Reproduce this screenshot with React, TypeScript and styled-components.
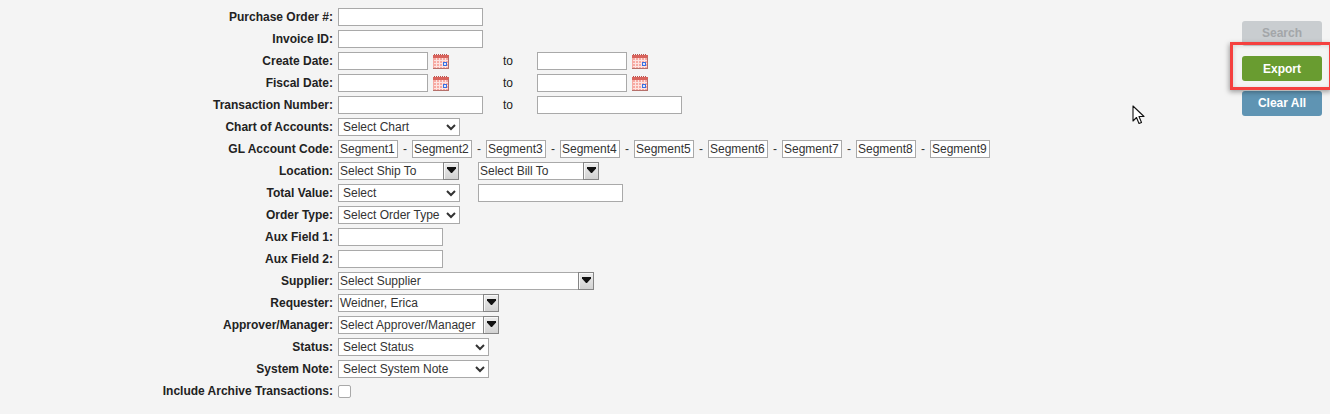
import styled, { createGlobalStyle } from 'styled-components';

const GlobalStyle = createGlobalStyle`
  html, body {
    margin: 0;
    padding: 0;
    background: #f4f4f4;
    font-family: 'Liberation Sans', Arial, sans-serif;
    font-size: 12px;
    color: #222;
  }
`;

const Page = styled.div`
  position: relative;
  display: flex;
  justify-content: space-between;
  width: 1330px;
  height: 414px;
  overflow: hidden;
`;

const Form = styled.div`
  display: flex;
  flex-direction: column;
  gap: 4px;
  padding-top: 8px;
`;

const Row = styled.div`
  display: flex;
  align-items: center;
  height: 18px;
`;

const Label = styled.label`
  width: 333px;
  margin-right: 5px;
  text-align: right;
  font-weight: bold;
  color: #222;
  flex-shrink: 0;
`;

const Input = styled.input<{ $w: number; $left?: number }>`
  box-sizing: border-box;
  width: ${(p) => p.$w}px;
  height: 18px;
  margin: 0 0 0 ${(p) => p.$left ?? 0}px;
  padding: 0 1px;
  border: 1px solid #a9a9a9;
  background: #fff;
  font: 12px 'Liberation Sans', Arial, sans-serif;
  color: #333;
  outline: none;
`;

const Select = styled.select<{ $w: number }>`
  box-sizing: border-box;
  width: ${(p) => p.$w}px;
  height: 18px;
  margin: 0;
  padding: 0;
  border: 1px solid #a9a9a9;
  border-radius: 0;
  background-color: #fff;
  font: 12px 'Liberation Sans', Arial, sans-serif;
  color: #333;
  outline: none;
`;

const Combo = styled.div<{ $w: number; $left?: number }>`
  box-sizing: border-box;
  display: flex;
  width: ${(p) => p.$w}px;
  height: 18px;
  margin-left: ${(p) => p.$left ?? 0}px;
  border: 1px solid #a9a9a9;
  background: #fff;
`;

const ComboText = styled.span`
  flex: 1;
  padding-left: 1px;
  line-height: 16px;
  color: #333;
  white-space: nowrap;
  overflow: hidden;
`;

const ComboButton = styled.span`
  box-sizing: border-box;
  display: flex;
  align-items: center;
  justify-content: center;
  width: 16px;
  margin: -1px -1px -1px 0;
  border: 1px solid #858585;
  box-shadow: inset 1px 1px 0 #f8f8f8;
  background: linear-gradient(#ececec, #d2d2d2);
`;

const ComboArrow = styled.svg`
  display: block;
  width: 9px;
  height: 6px;
  margin-bottom: 3px;
`;

const CalendarIcon = styled.svg`
  display: block;
  width: 16px;
  height: 15px;
  margin-left: 5px;
  flex-shrink: 0;
`;

const To = styled.span<{ $left: number }>`
  margin-left: ${(p) => p.$left}px;
  width: 34px;
  color: #222;
  flex-shrink: 0;
`;

const Dash = styled.span`
  width: 14px;
  text-align: center;
  color: #333;
  flex-shrink: 0;
`;

const Segment = styled.span`
  display: contents;
`;

const Checkbox = styled.span`
  box-sizing: border-box;
  display: block;
  width: 13px;
  height: 13px;
  margin-top: 1px;
  border: 1px solid #a9a9a9;
  border-radius: 2px;
  background: #fff;
`;

const Actions = styled.div`
  display: flex;
  flex-direction: column;
  gap: 10px;
  width: 80px;
  margin-right: 8px;
  padding-top: 21px;
`;

const ActionButton = styled.button<{ $bg: string; $fg: string; $lift?: boolean }>`
  width: 80px;
  height: 25px;
  margin: 0;
  padding: 0 0 ${(p) => (p.$lift ? 2 : 0)}px;
  border: 0;
  border-radius: 3px;
  background: ${(p) => p.$bg};
  color: ${(p) => p.$fg};
  font: bold 12px 'Liberation Sans', Arial, sans-serif;
`;

const Highlight = styled.div`
  position: absolute;
  left: 1230px;
  top: 42px;
  box-sizing: border-box;
  width: 102px;
  height: 48px;
  border: 3px solid #f5403f;
  box-shadow: -1px 2px 5px rgba(0, 0, 0, 0.35), inset 1px 1px 4px rgba(0, 0, 0, 0.12);
`;

const Cursor = styled.svg`
  position: absolute;
  left: 1132px;
  top: 105px;
  width: 13px;
  height: 20px;
`;

function Calendar() {
  const cols = [3, 6, 9, 12];
  const rows = [6, 9, 12];
  return (
    <CalendarIcon viewBox="0 0 16 15">
      <rect x="0" y="1" width="16" height="14" fill="#f6aaa3" />
      <path d="M0 2.5h16" stroke="#d8635c" strokeWidth="3" />
      <path d="M1 .5h1M3 .5h1M5 .5h1M7 .5h1M9 .5h1M11 .5h1M13 .5h1" stroke="#b9524c" strokeWidth="1" />
      {cols.map((x) => (
        <path key={x} d={`M${x + 0.5} 4v10`} stroke="#fde3e0" strokeWidth="1" />
      ))}
      {rows.map((y) => (
        <path key={y} d={`M1 ${y + 0.5}h14`} stroke="#fde3e0" strokeWidth="1" />
      ))}
      <path d="M15.5 3v12M0 14.5h16" stroke="#b5706b" strokeWidth="1" />
      <rect x="10.5" y="8.5" width="3" height="3" fill="#dfe8fb" stroke="#3b6fe0" />
    </CalendarIcon>
  );
}

function ComboBox({ w, text, left }: { w: number; text: string; left?: number }) {
  return (
    <Combo $w={w} $left={left}>
      <ComboText>{text}</ComboText>
      <ComboButton>
        <ComboArrow viewBox="0 0 9 6">
          <path d="M0 0h9v1.5L5 6H4L0 1.500z" fill="#111" />
        </ComboArrow>
      </ComboButton>
    </Combo>
  );
}

const segments = [1, 2, 3, 4, 5, 6, 7, 8, 9];

export default function App() {
  return (
    <Page>
      <GlobalStyle />
      <Form>
        <Row>
          <Label>Purchase Order #:</Label>
          <Input $w={145} />
        </Row>
        <Row>
          <Label>Invoice ID:</Label>
          <Input $w={145} />
        </Row>
        <Row>
          <Label>Create Date:</Label>
          <Input $w={90} />
          <Calendar />
          <To $left={54}>to</To>
          <Input $w={90} />
          <Calendar />
        </Row>
        <Row>
          <Label>Fiscal Date:</Label>
          <Input $w={90} />
          <Calendar />
          <To $left={54}>to</To>
          <Input $w={90} />
          <Calendar />
        </Row>
        <Row>
          <Label>Transaction Number:</Label>
          <Input $w={145} />
          <To $left={20}>to</To>
          <Input $w={145} />
        </Row>
        <Row>
          <Label>Chart of Accounts:</Label>
          <Select $w={122}>
            <option>Select Chart</option>
          </Select>
        </Row>
        <Row>
          <Label>GL Account Code:</Label>
          {segments.map((n) => (
            <Segment key={n}>
              {n > 1 && <Dash>-</Dash>}
              <Input $w={60} defaultValue={`Segment${n}`} />
            </Segment>
          ))}
        </Row>
        <Row>
          <Label>Location:</Label>
          <ComboBox w={121} text="Select Ship To" />
          <ComboBox w={121} left={19} text="Select Bill To" />
        </Row>
        <Row>
          <Label>Total Value:</Label>
          <Select $w={122}>
            <option>Select</option>
          </Select>
          <Input $w={145} $left={18} />
        </Row>
        <Row>
          <Label>Order Type:</Label>
          <Select $w={122}>
            <option>Select Order Type</option>
          </Select>
        </Row>
        <Row>
          <Label>Aux Field 1:</Label>
          <Input $w={105} />
        </Row>
        <Row>
          <Label>Aux Field 2:</Label>
          <Input $w={105} />
        </Row>
        <Row>
          <Label>Supplier:</Label>
          <ComboBox w={256} text="Select Supplier" />
        </Row>
        <Row>
          <Label>Requester:</Label>
          <ComboBox w={161} text="Weidner, Erica" />
        </Row>
        <Row>
          <Label>Approver/Manager:</Label>
          <ComboBox w={161} text="Select Approver/Manager" />
        </Row>
        <Row>
          <Label>Status:</Label>
          <Select $w={151}>
            <option>Select Status</option>
          </Select>
        </Row>
        <Row>
          <Label>System Note:</Label>
          <Select $w={151}>
            <option>Select System Note</option>
          </Select>
        </Row>
        <Row>
          <Label>Include Archive Transactions:</Label>
          <Checkbox />
        </Row>
      </Form>
      <Actions>
        <ActionButton $bg="#c9cdd0" $fg="#a3a6a9" $lift>Search</ActionButton>
        <ActionButton $bg="#699c30" $fg="#fff">Export</ActionButton>
        <ActionButton $bg="#5f94b3" $fg="#fff" $lift>Clear All</ActionButton>
      </Actions>
      <Highlight />
      <Cursor viewBox="0 0 13 20">
        <path d="M1 1v15l3.500-3.500 2.500 6 2.500-1-2.500-6H12z" fill="#fff" stroke="#111" strokeWidth="1.1" strokeLinejoin="round" />
      </Cursor>
    </Page>
  );
}
